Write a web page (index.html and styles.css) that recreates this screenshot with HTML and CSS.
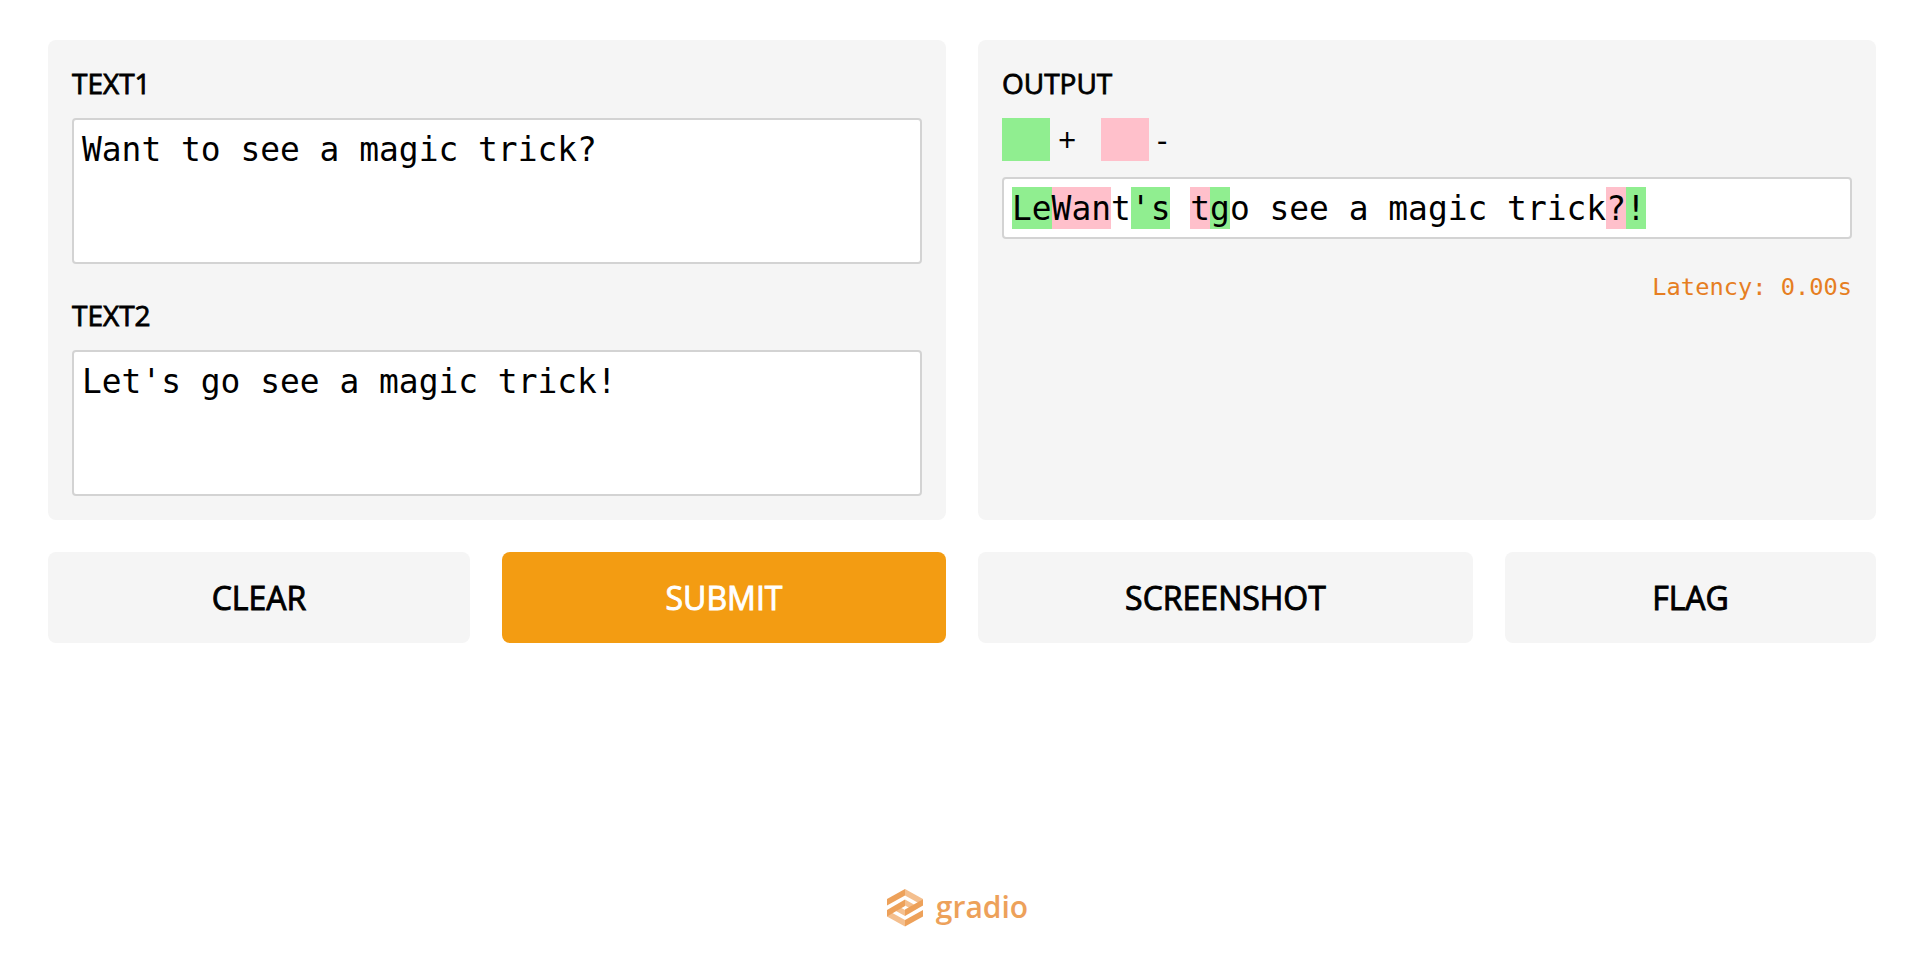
FILE: index.html
```html
<!DOCTYPE html>
<html lang="en">
<head>
<meta charset="utf-8">
<title>Gradio</title>
<link rel="stylesheet" href="styles.css">
</head>
<body>
<main class="interface">
  <div class="column">
    <section class="panel">
      <div class="field">
        <h2 class="label">TEXT1</h2>
        <div class="textbox">Want to see a magic trick?</div>
      </div>
      <div class="field">
        <h2 class="label">TEXT2</h2>
        <div class="textbox">Let's go see a magic trick!</div>
      </div>
    </section>
    <div class="buttons">
      <button class="button clear">CLEAR</button>
      <button class="button submit">SUBMIT</button>
    </div>
  </div>
  <div class="column">
    <section class="panel">
      <h2 class="label">OUTPUT</h2>
      <div class="legend">
        <span class="swatch add"></span><span class="sign plus">+</span>
        <span class="swatch del"></span><span class="sign">-</span>
      </div>
      <div class="highlighted"><span class="add">Le</span><span class="del">Wan</span><span>t</span><span class="add">'s</span><span> </span><span class="del">t</span><span class="add">g</span><span>o see a magic trick</span><span class="del">?</span><span class="add">!</span></div>
      <div class="latency">Latency: 0.00s</div>
    </section>
    <div class="buttons">
      <button class="button screenshot">SCREENSHOT</button>
      <button class="button flag">FLAG</button>
    </div>
  </div>
</main>
<footer class="footer">
  <svg class="logo" viewBox="0 0 36 38" width="36" height="38">
    <path fill="#f4bf8e" d="M18 0 36 10v6.500L18 6.500z"/>
    <path fill="#eda15a" d="M18 0 0 10v6.500L18 6.500z"/>
    <path fill="#f4bf8e" d="M0 21 18 31v6.500L0 27.500z"/>
    <path fill="#eda15a" d="M36 21 18 31v6.500l18-10z"/>
    <path fill="#f4bf8e" d="M18 10.500 27 15.500 22.500 19 18 16.500zM18 27 9 22l4.500-3.500L18 21z"/>
    <path fill="#eda15a" d="M0 21 18 10.500V17L0 27.500z"/>
    <path fill="#eda15a" d="M36 10.500 36 16.500 18 27v-6.500l14-8z"/>
  </svg>
  <span class="brand">gradio</span>
</footer>
</body>
</html>
```

FILE: styles.css
```css
* { box-sizing: border-box; }
body {
  margin: 0;
  background: #fff;
  color: #000;
  font-family: "Open Sans", sans-serif;
}
.interface {
  display: grid;
  grid-template-columns: 1fr 1fr;
  gap: 32px;
  padding: 40px 48px 0;
}
.column { display: flex; flex-direction: column; gap: 32px; }
.panel {
  height: 480px;
  padding: 24px;
  border-radius: 8px;
  background: #f5f5f5;
}
.field + .field { margin-top: 32px; }
.label {
  height: 42px;
  margin: 0 0 12px;
  font-size: 28px;
  line-height: 39px;
  font-weight: 400;
  -webkit-text-stroke: 0.8px currentColor;
}
.textbox, .highlighted {
  border: 2px solid #d3d3d3;
  border-radius: 4px;
  background: #fff;
  font-family: "DejaVu Sans Mono", monospace;
  font-size: 32.9px;
  line-height: 44px;
  white-space: pre;
}
.textbox { height: 146px; padding: 8px; }
.highlighted {
  display: flex;
  height: 62px;
  margin-top: 16px;
  padding: 8px;
}
.highlighted span { height: 42px; }
.add { background: #90ee90; }
.del { background: #ffc0cb; }
.legend { display: flex; align-items: center; }
.swatch { width: 48px; height: 43px; margin-right: 8px; }
.sign { font-size: 32px; line-height: 43px; height: 43px; }
.plus { width: 43px; }
.latency {
  margin-top: 34px;
  color: #e67e22;
  font-family: "DejaVu Sans Mono", monospace;
  font-size: 23.7px;
  line-height: 28px;
  text-align: right;
}
.buttons { display: flex; gap: 32px; }
.button {
  height: 91px;
  padding: 0;
  border: 0;
  border-radius: 8px;
  background: #f5f5f5;
  color: #000;
  font: 400 32px/44px "Open Sans", sans-serif;
  -webkit-text-stroke: 0.9px currentColor;
}
.clear { width: 422px; }
.submit { width: 444px; background: #f39c12; color: #fff; }
.screenshot { width: 495px; }
.flag { width: 371px; }
.footer {
  display: flex;
  justify-content: center;
  gap: 13px;
  padding: 246px 9px 0 0;
}
.brand {
  color: #eda15a;
  font-size: 30px;
  font-weight: 600;
  line-height: 36px;
}
```
